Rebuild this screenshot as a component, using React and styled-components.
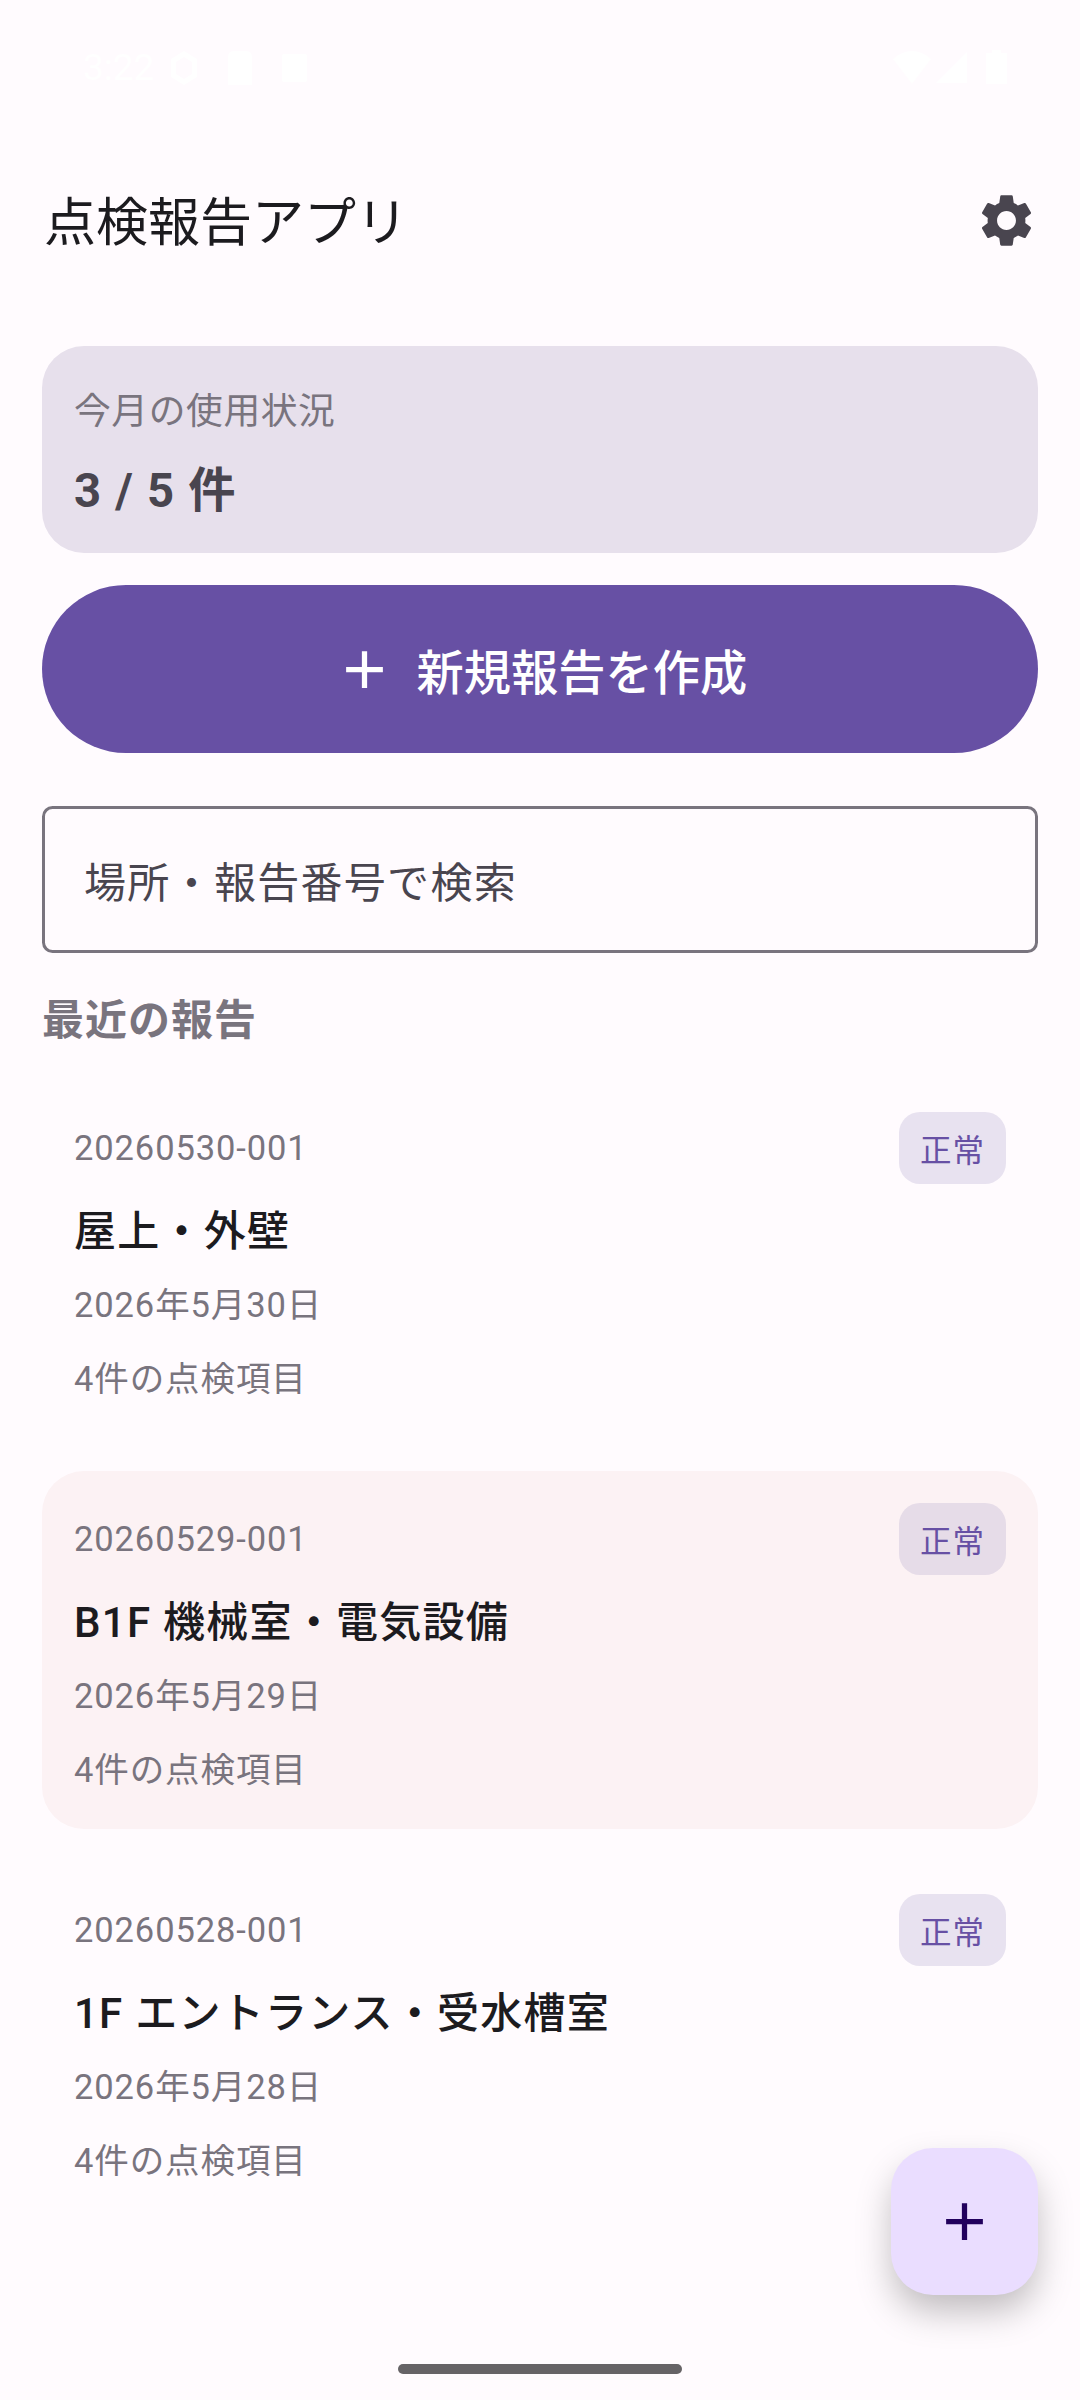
import React from "react";
import styled, { createGlobalStyle } from "styled-components";
import { MdSettings, MdAdd } from "react-icons/md";

const reports = [
  { id: "20260530-001", place: "屋上・外壁", date: "2026年5月30日", items: "4件の点検項目" },
  { id: "20260529-001", place: "B1F 機械室・電気設備", date: "2026年5月29日", items: "4件の点検項目", tinted: true },
  { id: "20260528-001", place: "1F エントランス・受水槽室", date: "2026年5月28日", items: "4件の点検項目" }
];

function App() {
  return (
    <Screen>
      <GlobalStyle />
      <StatusBar>
        <StatusGroup>
          <Clock>3:22</Clock>
          <StatusIcon width="28" height="36" viewBox="0 0 28 36">
            <path d="M14 1 L27 9 V27 L14 35 L1 27 V9 Z M14 7 L6 12 V24 L14 29 L22 24 V12 Z" fillRule="evenodd" />
          </StatusIcon>
          <StatusIcon width="24" height="34" viewBox="0 0 24 34">
            <path d="M6 0 H18 Q24 0 24 6 V34 H0 V6 Q0 0 6 0 Z" />
          </StatusIcon>
          <StatusIcon width="25" height="28" viewBox="0 0 25 28">
            <path d="M2 0 H23 Q25 0 25 2 V26 Q25 28 23 28 H2 Q0 28 0 26 V2 Q0 0 2 0 Z" />
          </StatusIcon>
        </StatusGroup>
        <StatusGroup $tight>
          <StatusIcon width="38" height="33" viewBox="0 0 38 33">
            <path d="M19 33 L0 8 Q9 0 19 0 Q29 0 38 8 Z" />
          </StatusIcon>
          <StatusIcon width="31" height="31" viewBox="0 0 31 31">
            <path d="M31 0 V31 H0 Z" />
          </StatusIcon>
          <BatteryIcon width="21" height="34" viewBox="0 0 21 34">
            <path d="M6 0 H15 V3 H21 V34 H0 V3 H6 Z" />
          </BatteryIcon>
        </StatusGroup>
      </StatusBar>

      <TopBar>
        <AppTitle>点検報告アプリ</AppTitle>
        <SettingsIcon />
      </TopBar>

      <Content>
        <UsageCard>
          <UsageLabel>今月の使用状況</UsageLabel>
          <UsageValue>3 / 5 件</UsageValue>
        </UsageCard>

        <CreateButton>
          <MdAdd size={63} />
          <span>新規報告を作成</span>
        </CreateButton>

        <SearchField>場所・報告番号で検索</SearchField>

        <SectionTitle>最近の報告</SectionTitle>

        <ReportList>
          {reports.map((report) => (
            <ReportCard key={report.id} $tinted={report.tinted}>
              <ReportHead>
                <MetaText>{report.id}</MetaText>
                <Badge $tinted={report.tinted}>正常</Badge>
              </ReportHead>
              <ReportTitle>{report.place}</ReportTitle>
              <DateText>{report.date}</DateText>
              <CountText>{report.items}</CountText>
            </ReportCard>
          ))}
        </ReportList>
      </Content>

      <Fab>
        <MdAdd size={63} />
      </Fab>
      <HomeIndicator />
    </Screen>
  );
}

const GlobalStyle = createGlobalStyle`
  html, body {
    margin: 0;
    padding: 0;
    background: #fffbfe;
  }

  * {
    box-sizing: border-box;
  }
`;

const Screen = styled.div`
  position: relative;
  width: 1080px;
  height: 2400px;
  overflow: hidden;
  background: #fffbfe;
  color: #1c1b1f;
  font-family: Roboto, "Noto Sans CJK JP", sans-serif;
`;

const StatusBar = styled.div`
  height: 136px;
  padding: 50px 73px 0 83px;
  display: flex;
  align-items: flex-start;
  justify-content: space-between;
  color: #ffffff;
`;

const StatusGroup = styled.div`
  display: flex;
  align-items: center;
  gap: ${(p) => (p.$tight ? "5px" : "30px")};
`;

const Clock = styled.span`
  font-size: 37px;
  line-height: 36px;
  margin-right: -14px;
`;

const StatusIcon = styled.svg`
  display: block;
  fill: currentColor;
`;

const BatteryIcon = styled(StatusIcon)`
  margin-left: 14px;
`;

const TopBar = styled.div`
  height: 168px;
  padding: 0 42px 0 44px;
  display: flex;
  align-items: center;
  justify-content: space-between;
`;

const AppTitle = styled.h1`
  margin: 0;
  padding-top: 8px;
  font-size: 52px;
  font-weight: 400;
  line-height: 70px;
`;

const SettingsIcon = styled(MdSettings)`
  width: 63px;
  height: 63px;
  color: #49454f;
`;

const Content = styled.div`
  padding: 42px 42px 0;
  display: flex;
  flex-direction: column;
`;

const UsageCard = styled.div`
  height: 207px;
  padding: 40px 32px 0;
  border-radius: 42px;
  background: #e7e0ec;
`;

const UsageLabel = styled.div`
  font-size: 36.75px;
  line-height: 52.5px;
  letter-spacing: 0.6px;
  color: #79747e;
`;

const UsageValue = styled.div`
  margin-top: 21px;
  font-size: 47.25px;
  font-weight: 700;
  line-height: 63px;
  letter-spacing: 1.2px;
  color: #49454f;
`;

const CreateButton = styled.button`
  margin-top: 32px;
  height: 168px;
  border: 0;
  border-radius: 84px;
  background: #6750a4;
  color: #ffffff;
  display: flex;
  align-items: center;
  justify-content: center;
  gap: 21px;
  font-family: inherit;
  font-size: 47.25px;
  font-weight: 500;
`;

const SearchField = styled.div`
  margin-top: 53px;
  height: 147px;
  padding: 0 39px;
  border: 3px solid #79747e;
  border-radius: 10.5px;
  display: flex;
  align-items: center;
  font-size: 42px;
  letter-spacing: 1.3px;
  color: #49454f;
`;

const SectionTitle = styled.h2`
  margin: 36px 0 0;
  font-size: 42px;
  font-weight: 700;
  line-height: 63px;
  letter-spacing: 1px;
  color: #79747e;
`;

const ReportList = styled.div`
  margin-top: 28px;
  display: flex;
  flex-direction: column;
  gap: 33px;
`;

const ReportCard = styled.div`
  height: 358px;
  padding: 32px;
  border-radius: 42px;
  background: ${(p) => (p.$tinted ? "#fcf2f4" : "transparent")};
`;

const ReportHead = styled.div`
  display: flex;
  align-items: center;
  justify-content: space-between;
`;

const MetaText = styled.div`
  font-size: 34.5px;
  line-height: 52.5px;
  letter-spacing: 0.9px;
  color: #79747e;
`;

const Badge = styled.span`
  height: 72px;
  padding: 0 21px;
  border-radius: 21px;
  display: flex;
  align-items: center;
  font-size: 31.5px;
  letter-spacing: 1px;
  color: #6750a4;
  background: ${(p) => (p.$tinted ? "#e6dce8" : "#e8e2f0")};
`;

const ReportTitle = styled.div`
  margin-top: 16px;
  font-size: 42px;
  font-weight: 500;
  line-height: 63px;
  letter-spacing: 1.25px;
  color: #1c1b1f;
`;

const DateText = styled(MetaText)`
  margin-top: 16px;
`;

const CountText = styled(MetaText)`
  margin-top: 21px;
`;

const Fab = styled.div`
  position: absolute;
  left: 891px;
  top: 2148px;
  width: 147px;
  height: 147px;
  border-radius: 42px;
  background: #eaddff;
  color: #21005d;
  display: flex;
  align-items: center;
  justify-content: center;
  box-shadow: 0 18px 36px -2px rgba(0, 0, 0, 0.26);
`;

const HomeIndicator = styled.div`
  position: absolute;
  left: 398px;
  top: 2364px;
  width: 284px;
  height: 10px;
  border-radius: 5px;
  background: #666366;
`;

export default App;
